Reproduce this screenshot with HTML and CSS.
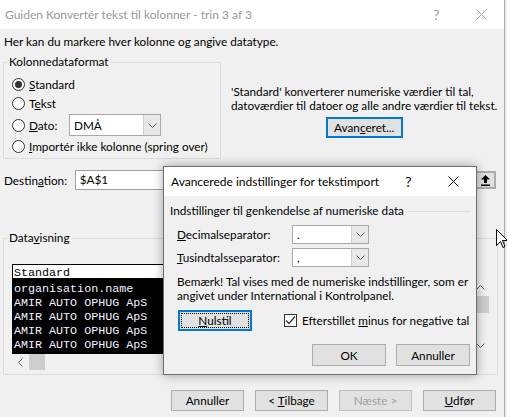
FILE: index.html
```html
<!DOCTYPE html>
<html lang="da">
<head>
    <meta charset="UTF-8">
    <meta name="viewport" content="width=device-width, initial-scale=1.0">
    <title>Guiden Konvertér tekst til kolonner</title>
    <link rel="stylesheet" href="styles.css">
</head>
<body>

<div class="window">
    <div class="titlebar">
        <span class="title">Guiden Konvertér tekst til kolonner - trin 3 af 3</span>
        <span class="caption-btn help">?</span>
        <span class="caption-btn">
            <svg width="11" height="11" viewBox="0 0 11 11"><path d="M0.5 0.5 L10.5 10.5 M10.5 0.5 L0.5 10.5" stroke="#a0a0a0" stroke-width="1"/></svg>
        </span>
    </div>

    <div class="content">
        <p class="intro">Her kan du markere hver kolonne og angive datatype.</p>

        <div class="format-row">
            <fieldset class="group format-group">
                <legend>Kolonnedataformat</legend>
                <div class="radio-row"><span class="radio checked"></span><span><u>S</u>tandard</span></div>
                <div class="radio-row"><span class="radio"></span><span>T<u>e</u>kst</span></div>
                <div class="radio-row dato-row">
                    <span class="radio"></span>
                    <span class="dato-label"><u>D</u>ato:</span>
                    <span class="combo dato-combo">
                        <span class="combo-value">DMÅ</span>
                        <span class="combo-arrow"><svg width="9" height="5" viewBox="0 0 9 5"><path d="M0.5 0.5 L4.5 4.5 L8.5 0.5" fill="none" stroke="#606060"/></svg></span>
                    </span>
                </div>
                <div class="radio-row"><span class="radio"></span><span><u>I</u>mportér ikke kolonne (spring over)</span></div>
            </fieldset>

            <div class="format-note">
                <p>'Standard' konverterer numeriske værdier til tal,<br>datoværdier til datoer og alle andre værdier til tekst.</p>
                <button class="btn btn-default btn-advanced">Avan<u>c</u>eret...</button>
            </div>
        </div>

        <div class="dest-row">
            <span class="dest-label">Destin<u>a</u>tion:</span>
            <span class="dest-input">$A$1</span>
            <span class="collapse-btn">
                <svg width="9" height="11" viewBox="0 0 9 11"><path d="M4.5 0 L9 4.5 L6 4.5 L6 8 L3 8 L3 4.5 L0 4.5 Z" fill="#000"/><rect x="0" y="9.5" width="9" height="1.5" fill="#000"/></svg>
            </span>
        </div>

        <fieldset class="group preview-group">
            <legend>Data<u>v</u>isning</legend>
            <div class="preview">
                <div class="preview-head">Standard</div>
                <div class="preview-data">organisation.name
AMIR AUTO OPHUG ApS
AMIR AUTO OPHUG ApS
AMIR AUTO OPHUG ApS
AMIR AUTO OPHUG ApS</div>
                <div class="vscroll">
                    <span class="scroll-arrow"><svg width="9" height="5" viewBox="0 0 9 5"><path d="M0.5 4.5 L4.5 0.5 L8.5 4.5" fill="none" stroke="#606060"/></svg></span>
                    <span class="vthumb"></span>
                    <span class="vspace"></span>
                    <span class="scroll-arrow"><svg width="9" height="5" viewBox="0 0 9 5"><path d="M0.5 0.5 L4.5 4.5 L8.5 0.5" fill="none" stroke="#606060"/></svg></span>
                </div>
                <div class="hscroll">
                    <span class="scroll-arrow"><svg width="5" height="9" viewBox="0 0 5 9"><path d="M4.5 0.5 L0.5 4.5 L4.5 8.5" fill="none" stroke="#606060"/></svg></span>
                    <span class="hthumb"></span>
                </div>
            </div>
        </fieldset>

        <div class="footer">
            <button class="btn btn-wide">Annuller</button>
            <button class="btn btn-wide">&lt; <u>T</u>ilbage</button>
            <button class="btn btn-wide" disabled>Næste &gt;</button>
            <button class="btn btn-wide"><u>U</u>dfør</button>
        </div>
    </div>
</div>

<!-- Avancerede indstillinger (modal over guiden) -->
<div class="dialog">
    <div class="dialog-titlebar">
        <span class="title">Avancerede indstillinger for tekstimport</span>
        <span class="caption-btn help">?</span>
        <span class="caption-btn">
            <svg width="11" height="11" viewBox="0 0 11 11"><path d="M0.5 0.5 L10.5 10.5 M10.5 0.5 L0.5 10.5" stroke="#000" stroke-width="1"/></svg>
        </span>
    </div>
    <div class="dialog-body">
        <div class="section-head">Indstillinger til genkendelse af numeriske data</div>
        <div class="sep-row first">
            <span class="sep-label"><u>D</u>ecimalseparator:</span>
            <span class="combo sep-combo">
                <span class="combo-value">.</span>
                <span class="combo-arrow"><svg width="9" height="5" viewBox="0 0 9 5"><path d="M0.5 0.5 L4.5 4.5 L8.5 0.5" fill="none" stroke="#606060"/></svg></span>
            </span>
        </div>
        <div class="sep-row">
            <span class="sep-label"><u>T</u>usindtalsseparator:</span>
            <span class="combo sep-combo">
                <span class="combo-value">,</span>
                <span class="combo-arrow"><svg width="9" height="5" viewBox="0 0 9 5"><path d="M0.5 0.5 L4.5 4.5 L8.5 0.5" fill="none" stroke="#606060"/></svg></span>
            </span>
        </div>
        <p class="note">Bemærk! Tal vises med de numeriske indstillinger, som er<br>angivet under International i Kontrolpanel.</p>
        <div class="reset-row">
            <button class="btn btn-default btn-reset"><u>N</u>ulstil</button>
            <span class="check-wrap">
                <span class="checkbox"><svg width="11" height="11" viewBox="0 0 11 11"><path d="M1 5.5 L4 8.5 L10 1.5" fill="none" stroke="#333" stroke-width="1.2"/></svg></span>
                <span>Efterstillet <u>m</u>inus for negative tal</span>
            </span>
        </div>
        <div class="dialog-actions">
            <button class="btn btn-dialog">OK</button>
            <button class="btn btn-dialog">Annuller</button>
        </div>
    </div>
</div>

<svg class="cursor" width="12" height="20" viewBox="0 0 12 20">
    <path d="M0.5 0.5 L0.5 16.5 L4.5 12.5 L7 18.5 L9 17.5 L6.5 11.5 L11.5 11.5 Z" fill="#fff" stroke="#000" stroke-width="1" stroke-linejoin="round"/>
</svg>

</body>
</html>
```

FILE: styles.css
```css
* {
    box-sizing: border-box;
}
html, body {
    margin: 0;
}
body {
    position: relative;
    width: 507px;
    height: 417px;
    overflow: hidden;
    background-color: #ececec;
    font-family: Lato, "Noto Sans", sans-serif;
    font-size: 11.75px;
    color: #000;
}
u {
    text-underline-offset: 1px;
}

/* main wizard window */
.window {
    width: 505px;
    height: 417px;
    background-color: #f0f0f0;
    border-right: 1px solid #ababab;
}
.titlebar, .dialog-titlebar {
    display: flex;
    align-items: center;
    height: 29px;
    background-color: #fff;
}
.titlebar {
    padding-left: 5px;
    color: #999;
    font-size: 12px;
}
.title {
    flex: 1;
    white-space: nowrap;
}
.caption-btn {
    display: flex;
    align-items: center;
    justify-content: center;
    flex: none;
    width: 45px;
    height: 29px;
}
.caption-btn.help {
    font-size: 14px;
}

.content {
    padding: 0 8px 0 3px;
}
.intro {
    margin: 5px 0 0 1px;
    line-height: 16px;
}

/* group boxes */
.group {
    margin: 0;
    padding: 0;
    min-width: 0;
    border: 1px solid #dcdcdc;
}
.group legend {
    margin-left: 3px;
    padding: 0 2px;
    line-height: 16px;
}

.format-row {
    display: flex;
    align-items: flex-start;
    margin-top: 4px;
}
.format-group {
    flex: none;
    width: 218px;
    padding: 5px 0 2px;
}
.radio-row {
    display: flex;
    align-items: center;
    height: 19px;
    padding-left: 8px;
    white-space: nowrap;
}
.radio-row.dato-row {
    height: 24px;
}
.radio {
    display: flex;
    align-items: center;
    justify-content: center;
    flex: none;
    width: 13px;
    height: 13px;
    margin-right: 4px;
    border: 1px solid #333;
    border-radius: 50%;
    background-color: #fff;
}
.radio.checked::after {
    content: "";
    width: 7px;
    height: 7px;
    border-radius: 50%;
    background-color: #333;
}
.dato-label {
    width: 40px;
}

.combo {
    display: flex;
    flex: none;
    border: 1px solid #a8a8a8;
    background-color: #fff;
}
.combo-value {
    flex: 1;
    padding-left: 4px;
    display: flex;
    align-items: center;
}
.combo-arrow {
    display: flex;
    align-items: center;
    justify-content: center;
    width: 17px;
    background-color: #e8e8e8;
    border-left: 1px solid #d0d0d0;
}
.dato-combo {
    width: 92px;
    height: 22px;
}

.format-note {
    display: flex;
    flex-direction: column;
    align-items: center;
    margin: 31px 0 0 10px;
}
.format-note p {
    margin: 0;
    line-height: 14.4px;
    white-space: nowrap;
}

/* buttons */
.btn {
    height: 21px;
    padding: 0;
    font: inherit;
    color: #000;
    background-color: #e1e1e1;
    border: 1px solid #adadad;
    white-space: nowrap;
}
.btn:disabled {
    color: #a0a0a0;
    border-color: #bfbfbf;
}
.btn-default {
    border: 2px solid #0078d7;
}
.btn-advanced {
    width: 77px;
    margin-top: 3px;
}
.btn-wide {
    width: 73px;
}

/* destination */
.dest-row {
    display: flex;
    align-items: center;
    height: 20px;
    margin-top: 11px;
    padding-left: 1px;
}
.dest-label {
    width: 71px;
}
.dest-input {
    width: 400px;
    height: 20px;
    padding-left: 4px;
    line-height: 18px;
    border: 1px solid #a0a0a0;
    background-color: #fff;
}
.collapse-btn {
    display: flex;
    align-items: center;
    justify-content: center;
    width: 21px;
    height: 18px;
    margin-left: 2px;
    border: 2px solid #adadad;
    background-color: #e1e1e1;
}

/* data preview: header, rows and scrollbars */
.preview-group {
    width: 495px;
    margin-top: 40px;
    padding: 18px 0 3px;
}
.preview {
    display: grid;
    grid-template-columns: 1fr 17px;
    grid-template-rows: 15px 75px 17px;
    width: 477px;
    margin-left: 8px;
    font-family: "Liberation Mono", "Courier New", monospace;
    font-size: 11.7px;
}
.preview-head {
    grid-column: 1;
    grid-row: 1;
    padding: 2px 0 0 1px;
    line-height: 13px;
    overflow: hidden;
    background-color: #fff;
    border-top: 1px solid #000;
    border-left: 1px solid #000;
    border-bottom: 1px solid #000;
}
.preview-data {
    grid-column: 1;
    grid-row: 2;
    padding: 3px 0 0 1px;
    line-height: 14px;
    white-space: pre;
    color: #f2f2ff;
    background-color: #000;
    border-left: 1px solid #000;
}
.vscroll {
    grid-column: 2;
    grid-row: 2;
    display: flex;
    flex-direction: column;
    background-color: #f0f0f0;
}
.scroll-arrow {
    display: flex;
    align-items: center;
    justify-content: center;
    flex: none;
    width: 17px;
    height: 17px;
}
.vthumb {
    height: 17px;
    margin-left: 1px;
    background-color: #cdcdcd;
}
.vspace {
    flex: 1;
}
.hscroll {
    grid-column: 1;
    grid-row: 3;
    display: flex;
}
.hthumb {
    width: 16px;
    height: 16px;
    background-color: #cdcdcd;
}

.footer {
    display: flex;
    justify-content: flex-end;
    gap: 11px;
    margin-top: 15px;
}

/* advanced settings dialog */
.dialog {
    position: absolute;
    left: 163px;
    top: 166px;
    width: 314px;
    height: 209px;
    background-color: #f0f0f0;
    border: 1px solid #6e6e6e;
    box-shadow: 0 0 10px rgba(0, 0, 0, 0.35);
}
.dialog-titlebar {
    padding-left: 7px;
    font-size: 12px;
}
.dialog-body {
    padding: 7px 6px 0;
}
.section-head {
    display: flex;
    align-items: center;
    gap: 4px;
    line-height: 16px;
    white-space: nowrap;
}
.section-head::after {
    content: "";
    flex: 1;
    border-top: 1px solid #dcdcdc;
}
.sep-row {
    display: flex;
    align-items: center;
    height: 23px;
    padding-left: 7px;
}
.sep-row.first {
    margin-top: 4px;
}
.sep-label {
    width: 115px;
}
.sep-combo {
    width: 77px;
    height: 19px;
}
.note {
    margin: 6px 0 0 7px;
    line-height: 14px;
    white-space: nowrap;
}
.reset-row {
    display: flex;
    align-items: center;
    margin-top: 7px;
    padding-left: 8px;
    white-space: nowrap;
}
.btn-reset {
    width: 74px;
    outline: 1px dotted #000;
    outline-offset: -4px;
}
.check-wrap {
    display: flex;
    align-items: center;
    gap: 5px;
    margin-left: 32px;
}
.checkbox {
    display: flex;
    align-items: center;
    justify-content: center;
    width: 13px;
    height: 13px;
    border: 1px solid #333;
    background-color: #fff;
}
.dialog-actions {
    display: flex;
    justify-content: flex-end;
    gap: 10px;
    margin-top: 13px;
}
.btn-dialog {
    width: 74px;
    height: 22px;
}

.cursor {
    position: absolute;
    left: 496px;
    top: 229px;
}
```
